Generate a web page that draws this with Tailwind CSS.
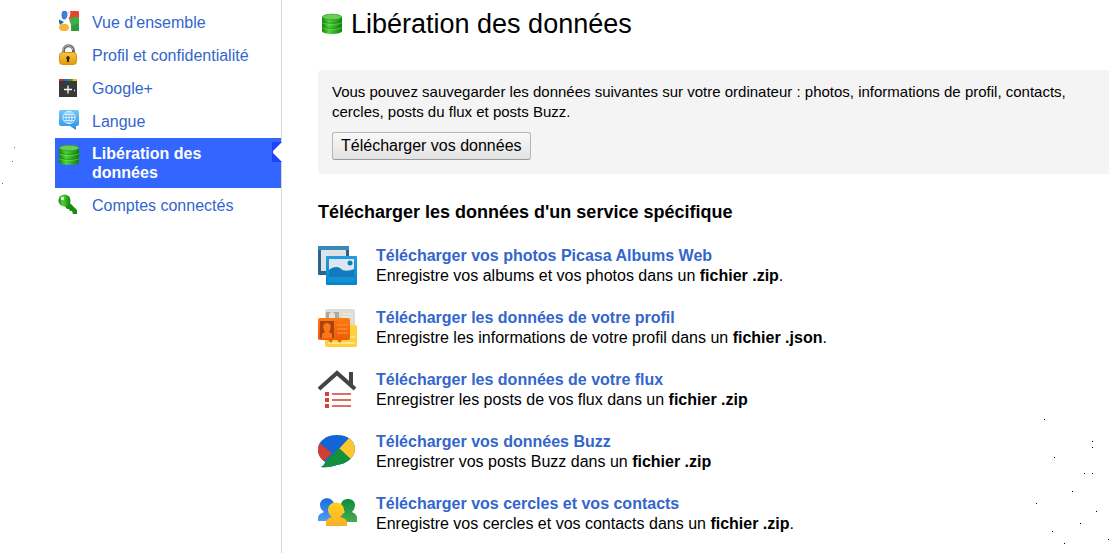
<!DOCTYPE html>
<html lang="fr">
<head>
  <meta charset="UTF-8">
  <title>Libération des données</title>
  <script src="https://cdn.jsdelivr.net/npm/@tailwindcss/browser@4"></script>
</head>
<body class="bg-white text-black text-base font-['Liberation_Sans',Arial,sans-serif]">

  <!-- dégradés partagés par les icônes -->
  <svg class="absolute w-0 h-0" aria-hidden="true">
    <defs>
      <linearGradient id="green"><stop offset="0" stop-color="#14850f"/><stop offset=".35" stop-color="#4ed437"/><stop offset="1" stop-color="#0f800c"/></linearGradient>
      <linearGradient id="gold" x2="0" y2="1"><stop offset="0" stop-color="#f8c545"/><stop offset="1" stop-color="#e39a08"/></linearGradient>
      <linearGradient id="sky" x2="0" y2="1"><stop offset="0" stop-color="#76c5fa"/><stop offset="1" stop-color="#2492e8"/></linearGradient>
      <linearGradient id="frame" x2="0" y2="1"><stop offset="0" stop-color="#259ce0"/><stop offset="1" stop-color="#0784cb"/></linearGradient>
      <linearGradient id="orange" x2="0" y2="1"><stop offset="0" stop-color="#ff7b10"/><stop offset="1" stop-color="#ee5907"/></linearGradient>
      <linearGradient id="yellow" x2="0" y2="1"><stop offset="0" stop-color="#ffd21c"/><stop offset="1" stop-color="#fbae25"/></linearGradient>
      <linearGradient id="blue" x2="0" y2="1"><stop offset="0" stop-color="#1a6be0"/><stop offset="1" stop-color="#4f9cf2"/></linearGradient>
      <linearGradient id="leaf" x2="0" y2="1"><stop offset="0" stop-color="#0b8d3b"/><stop offset="1" stop-color="#4aa94f"/></linearGradient>
      <clipPath id="tile"><rect x="1" width="20" height="20" rx="1"/></clipPath>
      <clipPath id="bubble"><path d="M19 3c11 0 18 6 18 14S29 32 19 33c-4 1-9 3-16 2 3-2 4-3 4-5C3 27 0 23 0 18 0 9 8 3 19 3z"/></clipPath>
      <symbol id="database" viewBox="0 0 22 22">
        <path d="M1 4v14c0 4 20 4 20 0V4z" fill="url(#green)"/>
        <path d="M1 8.500c3 2.500 17 2.500 20 0M1 13.500c3 2.500 17 2.500 20 0" fill="none" stroke="#0d6d0a" stroke-opacity=".5" stroke-width="1"/>
        <path d="M1 9.500c3 2.500 17 2.500 20 0M1 14.500c3 2.500 17 2.500 20 0" fill="none" stroke="#8bea74" stroke-opacity=".5" stroke-width="1"/>
        <ellipse cx="11" cy="4" rx="9.600" ry="2.800" fill="#6cca58" stroke="#2ea320" stroke-width=".8"/>
      </symbol>
    </defs>
  </svg>

  <div class="flex items-stretch min-h-screen">
    <!-- navigation -->
    <nav class="w-[282px] shrink-0 pl-[55px] pt-[6px] border-r border-[#d8d8d8] leading-[19px] text-[#3366cc]">
      <ul class="flex flex-col gap-px">
        <li>
          <a href="#" class="flex items-center gap-3 pl-[3px] py-[5px]">
            <svg class="w-[22px] h-[22px] shrink-0" viewBox="0 0 22 22"><g clip-path="url(#tile)">
              <path d="M10 0h12v8H10z" fill="#e94335"/>
              <path d="M11 9c4-4 7-4 11-2v14H11c2-4 2-8 0-12z" fill="#3caf45"/>
              <path d="M12 15c4 0 7-2 10-4v10H11z" fill="#2d9b3d"/>
              <ellipse cx="6.500" cy="4" rx="3" ry="4.500" fill="#3d7edb"/>
              <path d="M0 8l6 3-4 3z" fill="#2764bd"/>
              <ellipse cx="6" cy="16.500" rx="5" ry="3.800" fill="#f6b635"/>
              <path d="M11 0c1 4 0 6-2 8 2 3 4 5 3 12" fill="none" stroke="#fff" stroke-width="2"/>
            </g></svg>
            Vue d'ensemble
          </a>
        </li>
        <li>
          <a href="#" class="flex items-center gap-3 pl-[3px] py-[5px]">
            <svg class="w-[22px] h-[22px] shrink-0" viewBox="0 0 22 22">
              <path d="M5.500 11V7c0-7 10-7 10 0v4" fill="none" stroke="#666" stroke-width="3"/>
              <path d="M5 9V7c0-7 9-7 10-1" fill="none" stroke="#bcbcbc" stroke-width="1"/>
              <rect x="1.500" y="8.500" width="17" height="12" rx="3" fill="url(#gold)" stroke="#d59112"/>
              <path d="M10 12a2 2 0 0 1 1 3.500V18H9v-2.500A2 2 0 0 1 10 12z" fill="#352200"/>
            </svg>
            Profil et confidentialité
          </a>
        </li>
        <li>
          <a href="#" class="flex items-center gap-3 pl-[3px] py-[5px]">
            <svg class="w-[22px] h-[22px] shrink-0" viewBox="0 0 22 22">
              <path d="M1 2h18v18H1z" fill="#393939"/>
              <path d="M1 2h4.500v2H1z" fill="#d92d20"/><path d="M5.500 2H10v2H5.500z" fill="#2d62dd"/><path d="M10 2h4.500v2H10z" fill="#1da347"/><path d="M14.500 2H19v2h-4.500z" fill="#f1b812"/>
              <path d="M6 12.500h8M10 8.500v8M16 13.500h1" stroke="#fff" stroke-width="1.300"/>
            </svg>
            Google+
          </a>
        </li>
        <li>
          <a href="#" class="flex items-center gap-3 pl-[3px] py-[5px]">
            <svg class="w-[22px] h-[22px] shrink-0" viewBox="0 0 22 22">
              <path d="M3 0h16q2 0 2 2v12q0 2-2 2h-1v4l-6-4H3q-2 0-2-2V2q0-2 2-2z" fill="url(#sky)"/>
              <g fill="none" stroke="#d9f1ff" stroke-width=".9"><circle cx="11" cy="7.500" r="6.200"/><ellipse cx="11" cy="7.500" rx="3" ry="6.200"/><path d="M11 1v13M5 7.500h12M6 4.500h10M6 10.500h10"/></g>
            </svg>
            Langue
          </a>
        </li>
        <li class="relative">
          <a href="#" aria-current="page" class="flex items-start gap-3 pl-[3px] pr-16 py-[6px] bg-[#3366ff] text-white font-bold">
            <svg class="w-[22px] h-[22px] shrink-0"><use href="#database"/></svg>
            Libération des données
          </a>
          <svg class="absolute -right-px top-1 w-[10px] h-5" viewBox="0 0 10 20"><path d="M0 0h10v20H0z" fill="#1f42fb"/><path d="M10 0v20L1 11V9z" fill="#fff"/></svg>
        </li>
        <li>
          <a href="#" class="flex items-center gap-3 pl-[3px] py-[5px]">
            <svg class="w-[22px] h-[22px] shrink-0" viewBox="0 0 22 22">
              <path d="M10 7l9 9v4h-4l-1-3h-2l-1-2H9l-3-4z" fill="#158f0c"/>
              <ellipse cx="6.500" cy="6.500" rx="6" ry="6" fill="url(#green)"/>
              <circle cx="4.500" cy="4.500" r="1.700" fill="#e9ffe3"/>
            </svg>
            Comptes connectés
          </a>
        </li>
      </ul>
    </nav>

    <!-- contenu -->
    <main class="flex-1 min-w-0 pl-9 pt-[6px] leading-5">
      <h1 class="flex items-center gap-2 pl-[3px] text-[27px] leading-9">
        <svg class="w-[22px] h-[22px] shrink-0"><use href="#database"/></svg>
        Libération des données
      </h1>

      <section class="mt-7 rounded-l bg-[#f4f4f4] pl-[14px] pr-3 pt-3 pb-[14px]">
        <p class="text-[15px] leading-5">Vous pouvez sauvegarder les données suivantes sur votre ordinateur : photos, informations de profil, contacts, cercles, posts du flux et posts Buzz.</p>
        <button type="button" class="mt-[10px] block h-7 px-2 rounded-[3px] border border-[#b5b5b5] border-b-[#999] bg-linear-to-b from-[#f9f9f9] to-[#e3e3e3]">Télécharger vos données</button>
      </section>

      <h2 class="mt-7 font-bold text-lg leading-5">Télécharger les données d'un service spécifique</h2>

      <ul class="mt-6 flex flex-col gap-[22px]">
        <li class="flex gap-[18px]">
          <svg class="w-10 h-10 shrink-0" viewBox="0 0 40 40">
            <rect width="31" height="29" rx="1" fill="#27658e"/><path d="M3 4h25v21H3z" fill="#dfe3e8"/><path d="M0 0h31v4H0z" fill="#388ab9"/>
            <rect x="8" y="10" width="31" height="29" rx="1" fill="url(#frame)"/><path d="M11 13h25v18H11z" fill="#dbe7ef"/>
            <path d="M11 24c3-3 8-4 11-2 4 4 9 3 14 1v8H11z" fill="#127bbd"/><path d="M11 31h25v5H11z" fill="#1690d4"/>
            <circle cx="32" cy="17" r="2.500" fill="#127eb9"/>
          </svg>
          <div><a href="#" class="block font-bold text-[#3366cc]">Télécharger vos photos Picasa Albums Web</a><p>Enregistre vos albums et vos photos dans un <b>fichier .zip</b>.</p></div>
        </li>
        <li class="flex gap-[18px]">
          <svg class="w-10 h-10 shrink-0" viewBox="0 0 40 40">
            <rect x="7" y="1" width="30" height="23" rx="2" fill="#deddd4"/><path d="M8 4h13v8H8z" fill="#aaa9a2"/><path d="M11 10V6q3-4 6 0v4z" fill="#e6e4dc"/><path d="M24 6h11M24 9h11" stroke="#efeee8"/>
            <rect x="7" y="17" width="32" height="22" rx="2" fill="#ffcf3c"/><path d="M10 29h27M10 35h27" stroke="#ffe384" stroke-width="2"/><path d="M10 32h5l-2 3zm9 0h5l-2 3z" fill="#bb771b"/>
            <rect y="10" width="32" height="22" rx="2" fill="url(#orange)"/><path d="M2 13h14v17H2z" fill="#a44513"/>
            <path d="M4 30v-4l3-2c-3-5-2-9 2-9s5 4 2 9l3 2v4z" fill="#ff7619"/><path d="M19 17h11M19 21h11M19 25h11" stroke="#ff9a45"/>
          </svg>
          <div><a href="#" class="block font-bold text-[#3366cc]">Télécharger les données de votre profil</a><p>Enregistre les informations de votre profil dans un <b>fichier .json</b>.</p></div>
        </li>
        <li class="flex gap-[18px]">
          <svg class="w-10 h-10 shrink-0" viewBox="0 0 40 40">
            <path d="M1 19L19 3l18 16M33 2v13" fill="none" stroke="#424445" stroke-width="4"/>
            <path d="M7 22h4v4H7zm0 6h4v4H7zm0 6h4v4H7z" fill="#d93f34"/><path d="M14 24h19M14 30h19M14 36h19" stroke="#e06b60" stroke-width="2"/>
          </svg>
          <div><a href="#" class="block font-bold text-[#3366cc]">Télécharger les données de votre flux</a><p>Enregistrer les posts de vos flux dans un <b>fichier .zip</b></p></div>
        </li>
        <li class="flex gap-[18px]">
          <svg class="w-10 h-10 shrink-0" viewBox="0 0 40 40"><g clip-path="url(#bubble)">
            <path d="M0 0h40v40H0z" fill="#1464d6"/>
            <path d="M0 10l14 11L0 35z" fill="#d43d34"/>
            <path d="M31 6L20 18l18 15V3z" fill="#fcc72f"/>
            <path d="M21 16L-2 39h34l3-10z" fill="#138f3e"/>
          </g></svg>
          <div><a href="#" class="block font-bold text-[#3366cc]">Télécharger vos données Buzz</a><p>Enregistrer vos posts Buzz dans un <b>fichier .zip</b></p></div>
        </li>
        <li class="flex gap-[18px]">
          <svg class="w-10 h-10 shrink-0" viewBox="0 0 40 40">
            <path d="M0 27v-3q0-4 6-6-4-3-4-7c0-9 14-9 14 0q0 4-3 7l5 3v6z" fill="url(#blue)"/>
            <path d="M22 28v-7l5-3q-4-3-4-7c0-8 14-8 14 0q0 4-3 7 5 2 5 6v4z" fill="url(#leaf)"/>
            <path d="M8 32v-4q1-4 6-5-4-3-4-7c0-10 16-10 16 0q0 4-4 7 6 1 7 5v4z" fill="url(#yellow)"/>
          </svg>
          <div><a href="#" class="block font-bold text-[#3366cc]">Télécharger vos cercles et vos contacts</a><p>Enregistre vos cercles et vos contacts dans un <b>fichier .zip</b>.</p></div>
        </li>
      </ul>
    </main>
  </div>

  <!-- petits points épars sur le fond -->
  <svg class="absolute left-0 top-[147px] w-4 h-10 pointer-events-none" aria-hidden="true"><path d="M14 0h1v1h-1zM12 14h1v1h-1zM2 36h1v1H2z" fill="#3366ff"/></svg>
  <svg class="absolute right-0 top-[419px] w-[73px] h-[125px] pointer-events-none" viewBox="0 0 73 125" aria-hidden="true"><path d="M8 0h1v1H8zM56 22h1v1h-1zM56 28h1v1h-1zM18 38h1v1h-1zM48 54h1v1h-1zM56 54h1v1h-1zM36 72h1v1h-1zM0 84h1v1H0zM60 92h1v1h-1zM44 104h1v1h-1zM16 112h1v1h-1zM72 120h1v1h-1zM28 124h1v1h-1z"/></svg>
</body>
</html>
